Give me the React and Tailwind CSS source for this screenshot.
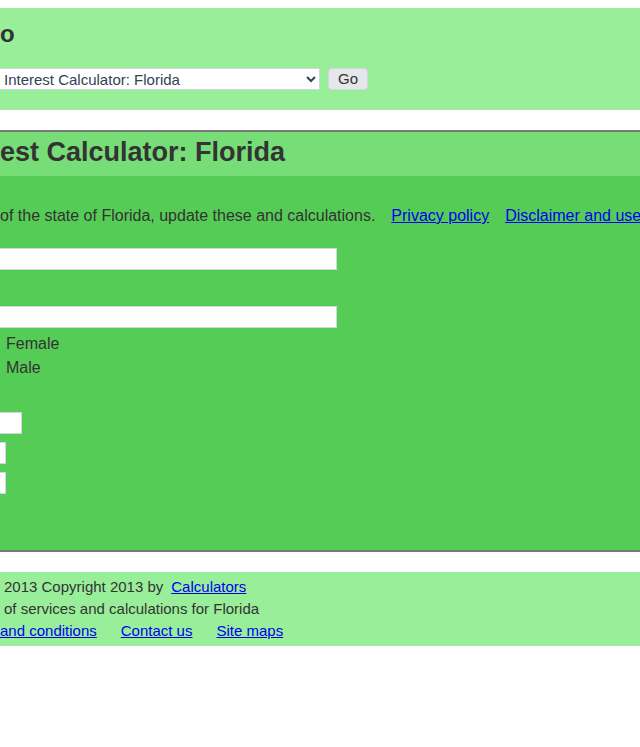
import React from 'react';

const footerLinks = ['and conditions', 'Contact us', 'Site maps'];

function TextField({ label, className }) {
  return (
    <input
      type="text"
      aria-label={label}
      className={`block h-[22px] border border-l-0 border-gray-300 bg-white text-sm ${className}`}
    />
  );
}

function Header() {
  return (
    <header className="bg-[#99ee99] pt-2 pb-5">
      <div className="text-2xl leading-9 font-bold">o</div>
      <form className="mt-4 flex items-center gap-2">
        <select
          aria-label="Calculator"
          className="h-[22px] w-80 border border-l-0 border-gray-300 bg-white text-[15px] leading-5 text-gray-700"
        >
          <option>Interest Calculator: Florida</option>
        </select>
        <button type="button" className="h-[22px] w-10 rounded-sm border border-gray-300 bg-gray-200 text-[15px] leading-5">
          Go
        </button>
      </form>
    </header>
  );
}

function Calculator() {
  return (
    <main className="mt-5 border-y-2 border-[#777777] bg-[#55cc55]">
      <h1 className="bg-[#77dd77] pb-1 text-[27px] leading-10 font-bold whitespace-nowrap">est Calculator: Florida</h1>
      <form className="pt-7 pb-14">
        <p className="flex gap-4 leading-6 whitespace-nowrap">
          <span>of the state of Florida, update these and calculations.</span>
          <a href="#privacy" className="text-[#0000ee] underline">Privacy policy</a>
          <a href="#disclaimer" className="text-[#0000ee] underline">Disclaimer and use</a>
        </p>
        <TextField label="Amount" className="mt-5 w-[337px]" />
        <TextField label="Date" className="mt-9 w-[337px]" />
        <div className="mt-1 pl-1.5 leading-6">
          <div>Female</div>
          <div>Male</div>
        </div>
        <div className="mt-8 flex flex-col gap-2">
          <TextField label="Year" className="w-[22px]" />
          <TextField label="Month" className="w-1.5" />
          <TextField label="Day" className="w-1.5" />
        </div>
      </form>
    </main>
  );
}

function Footer() {
  return (
    <footer className="mt-5 bg-[#99ee99] pt-1 pb-1 text-[15px] leading-[22px] whitespace-nowrap">
      <p className="flex gap-2 pl-1">
        <span>2013 Copyright 2013 by</span>
        <a href="#home" className="text-[#0000ee] underline">Calculators</a>
      </p>
      <p className="pl-1">of services and calculations for Florida</p>
      <nav className="flex gap-6">
        {footerLinks.map((link) => (
          <a key={link} href="#info" className="text-[#0000ee] underline">
            {link}
          </a>
        ))}
      </nav>
    </footer>
  );
}

export default function App() {
  return (
    <div className="overflow-hidden bg-white pt-2 font-['Liberation_Sans',Arial,sans-serif] text-base text-[#333333]">
      <Header />
      <Calculator />
      <Footer />
    </div>
  );
}
